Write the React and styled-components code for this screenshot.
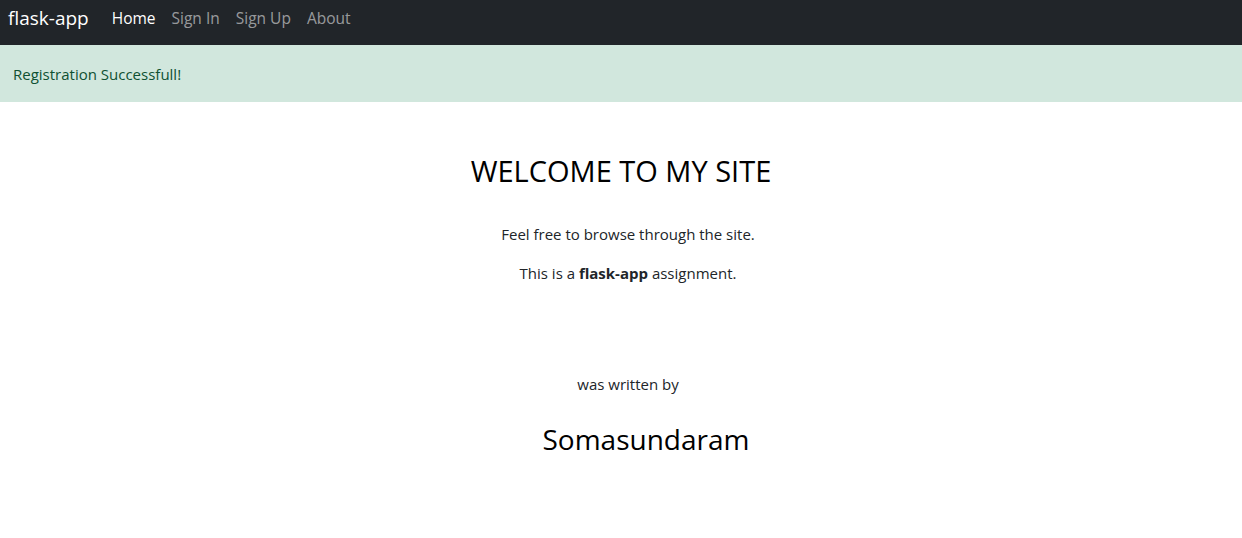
import styled, { createGlobalStyle } from 'styled-components';

const GlobalStyle = createGlobalStyle`
  body {
    margin: 0;
    font-family: "Open Sans", "Noto Sans", sans-serif;
    font-size: 15px;
    color: #212529;
    background: #fff;
  }
`;

const Navbar = styled.nav`
  display: flex;
  align-items: center;
  height: 45px;
  padding: 0 8px 10px;
  box-sizing: border-box;
  background: #212529;
`;

const Brand = styled.a`
  font-size: 19px;
  color: #fff;
  margin-right: 15px;
  text-decoration: none;
`;

const NavLink = styled.a`
  font-size: 15.5px;
  padding: 0 8px;
  color: ${p => (p.active ? '#fff' : 'rgba(255, 255, 255, 0.55)')};
  text-decoration: none;
`;

const Alert = styled.div`
  display: flex;
  align-items: center;
  height: 57px;
  padding: 0 13px;
  background: #d1e7dd;
  color: #0f5132;
  font-size: 15px;
`;

const Main = styled.main`
  display: flex;
  flex-direction: column;
  align-items: center;
  text-align: center;
  padding-top: 49px;
`;

const Title = styled.h2`
  margin: 0 0 34px;
  font-size: 29px;
  font-weight: 400;
  color: #000;
`;

const Text = styled.p`
  margin: 0 0 ${p => p.gap || 19}px;
  padding-left: 14px;
  font-size: 15px;
  color: #212529;
`;

const Author = styled.h3`
  margin: 0;
  padding-left: 50px;
  font-size: 28px;
  font-weight: 400;
  color: #000;
`;

export default function App() {
  return (
    <>
      <GlobalStyle />
      <Navbar>
        <Brand href="#">flask-app</Brand>
        <NavLink href="#" active>Home</NavLink>
        <NavLink href="#">Sign In</NavLink>
        <NavLink href="#">Sign Up</NavLink>
        <NavLink href="#">About</NavLink>
      </Navbar>
      <Alert>Registration Successfull!</Alert>
      <Main>
        <Title>WELCOME TO MY SITE</Title>
        <Text>Feel free to browse through the site.</Text>
        <Text gap={91}>This is a <b>flask-app</b> assignment.</Text>
        <Text gap={26}>was written by</Text>
        <Author>Somasundaram</Author>
      </Main>
    </>
  );
}
